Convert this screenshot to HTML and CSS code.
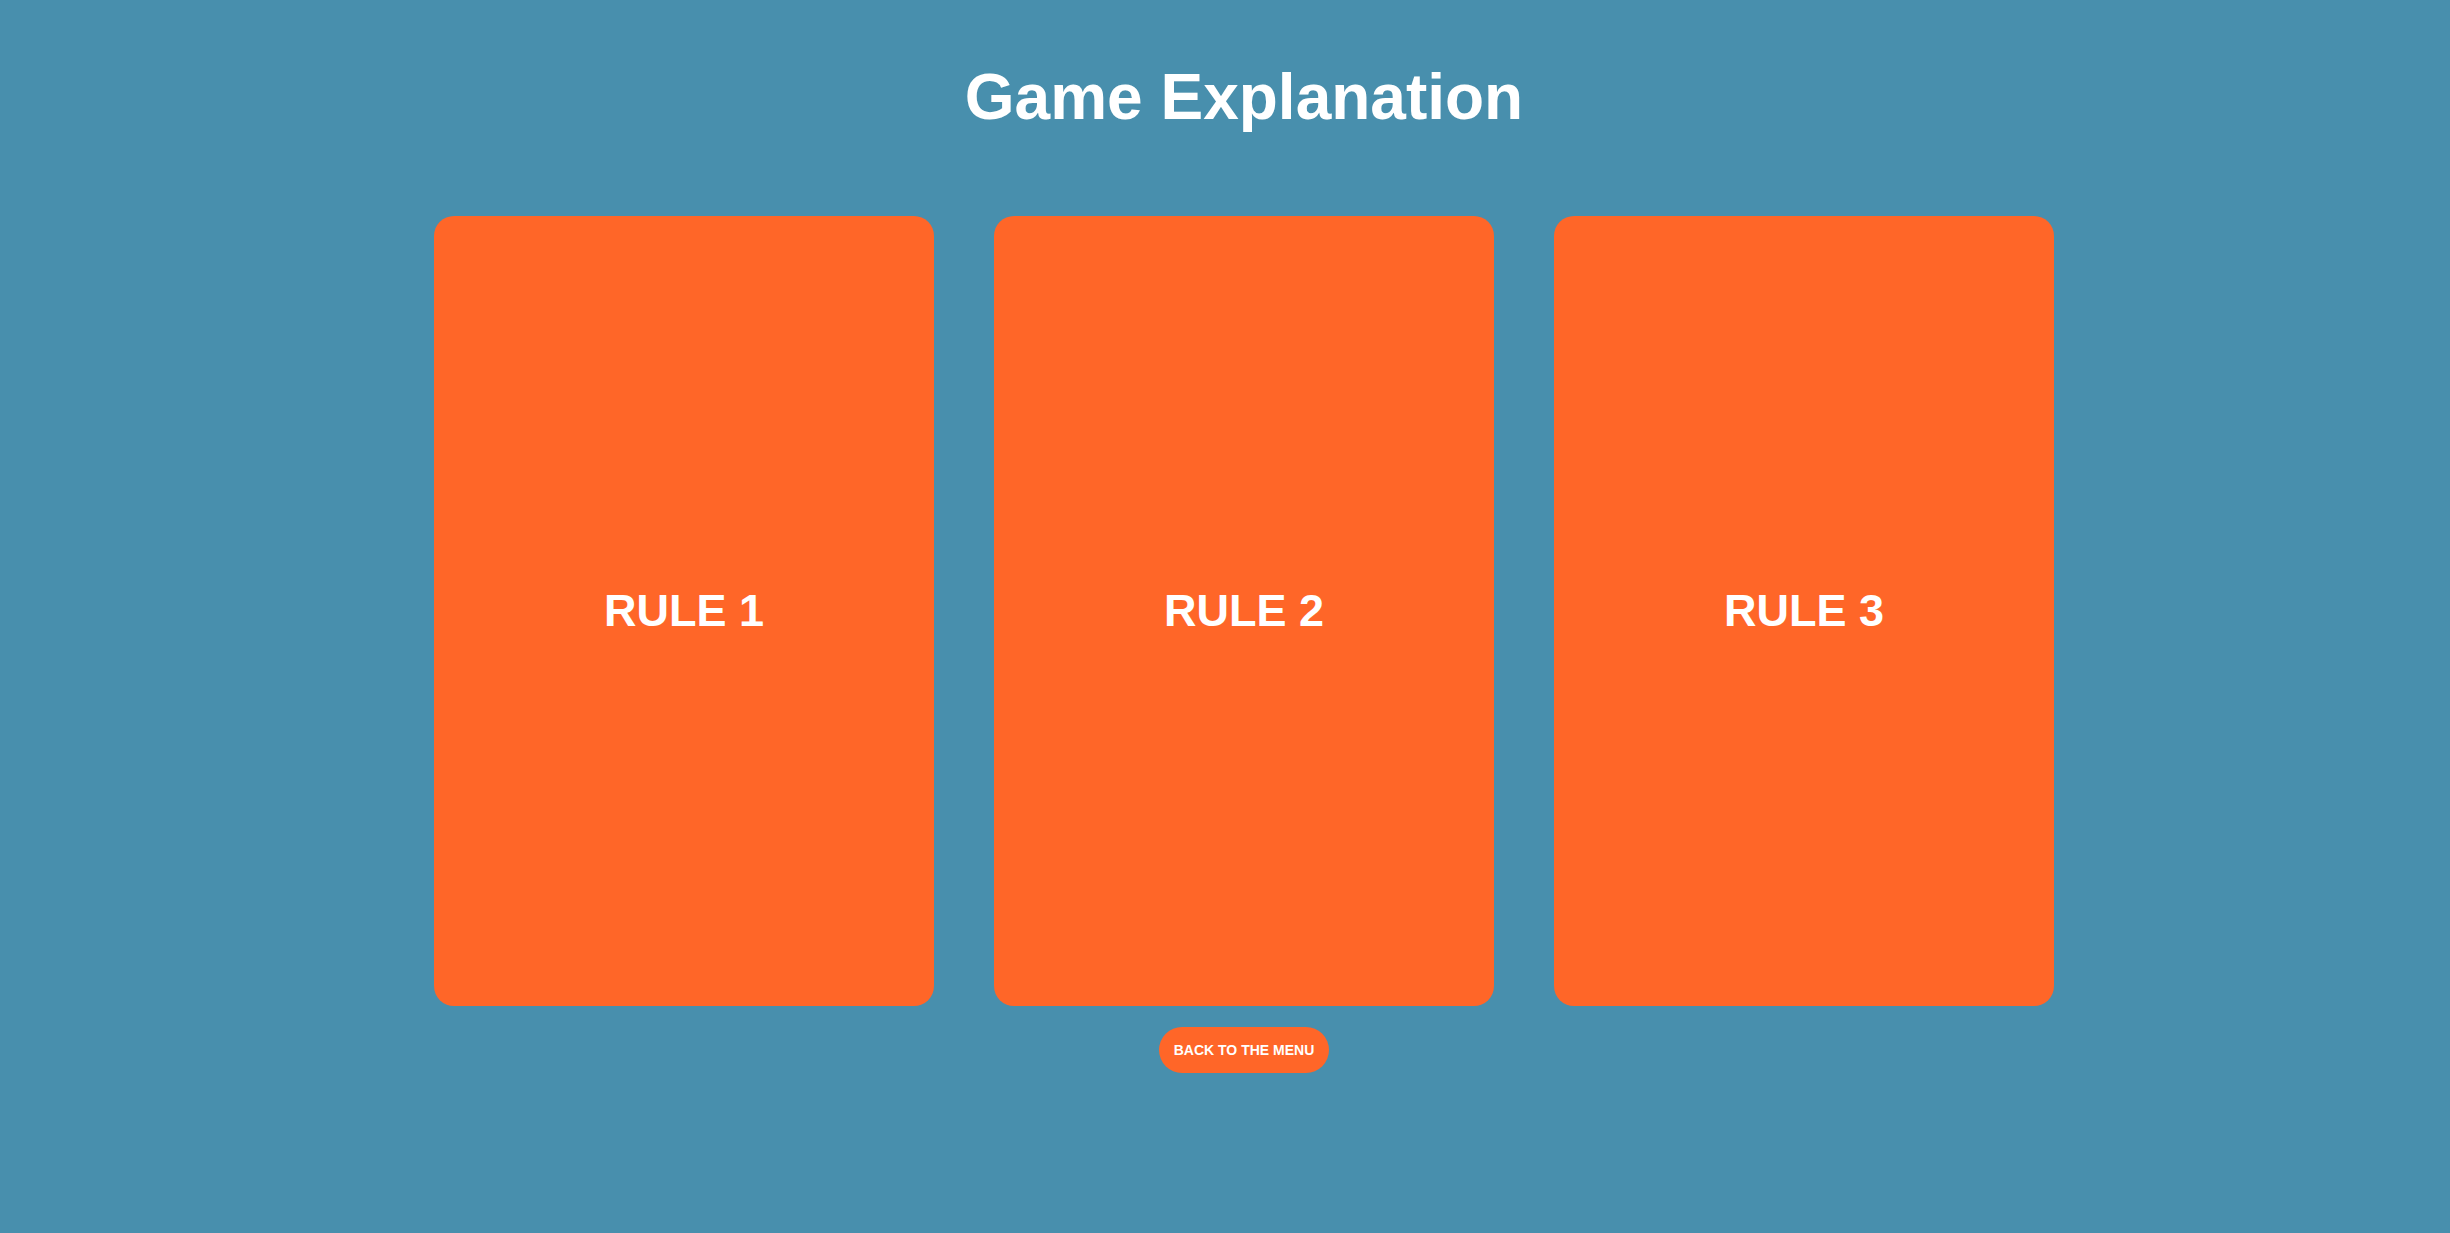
FILE: index.html
```html
<!DOCTYPE html>
<html lang="en">
<head>
<meta charset="utf-8">
<title>Game Explanation</title>
<link rel="stylesheet" href="styles.css">
</head>
<body>
<main class="page">
  <h1 class="title">Game Explanation</h1>
  <section class="cards">
    <div class="card"><span class="card-label">RULE 1</span></div>
    <div class="card"><span class="card-label">RULE 2</span></div>
    <div class="card"><span class="card-label">RULE 3</span></div>
  </section>
  <button class="back-btn" type="button">BACK TO THE MENU</button>
</main>
</body>
</html>
```

FILE: styles.css
```css
html, body {
  margin: 0;
  padding: 0;
}

body {
  background: #488fad;
  font-family: "Liberation Sans", Arial, sans-serif;
  color: #ffffff;
  min-height: 1233px;
}

.page {
  display: flex;
  flex-direction: column;
  align-items: center;
  padding-left: 38px;
}

.title {
  margin: 60px 0 0;
  font-size: 64px;
  font-weight: 700;
  line-height: 74px;
  height: 82px;
}

.cards {
  margin-top: 74px;
  display: grid;
  grid-template-columns: repeat(3, 500px);
  column-gap: 60px;
}

.card {
  height: 790px;
  background: #ff6628;
  border-radius: 20px;
  display: flex;
  align-items: center;
  justify-content: center;
}

.card-label {
  font-size: 45px;
  font-weight: 700;
}

.back-btn {
  margin-top: 21px;
  background: #ff6628;
  color: #ffffff;
  border: none;
  border-radius: 23px;
  height: 46px;
  padding: 0 15px;
  font-family: "Liberation Sans", Arial, sans-serif;
  font-size: 14px;
  font-weight: 700;
}
```
